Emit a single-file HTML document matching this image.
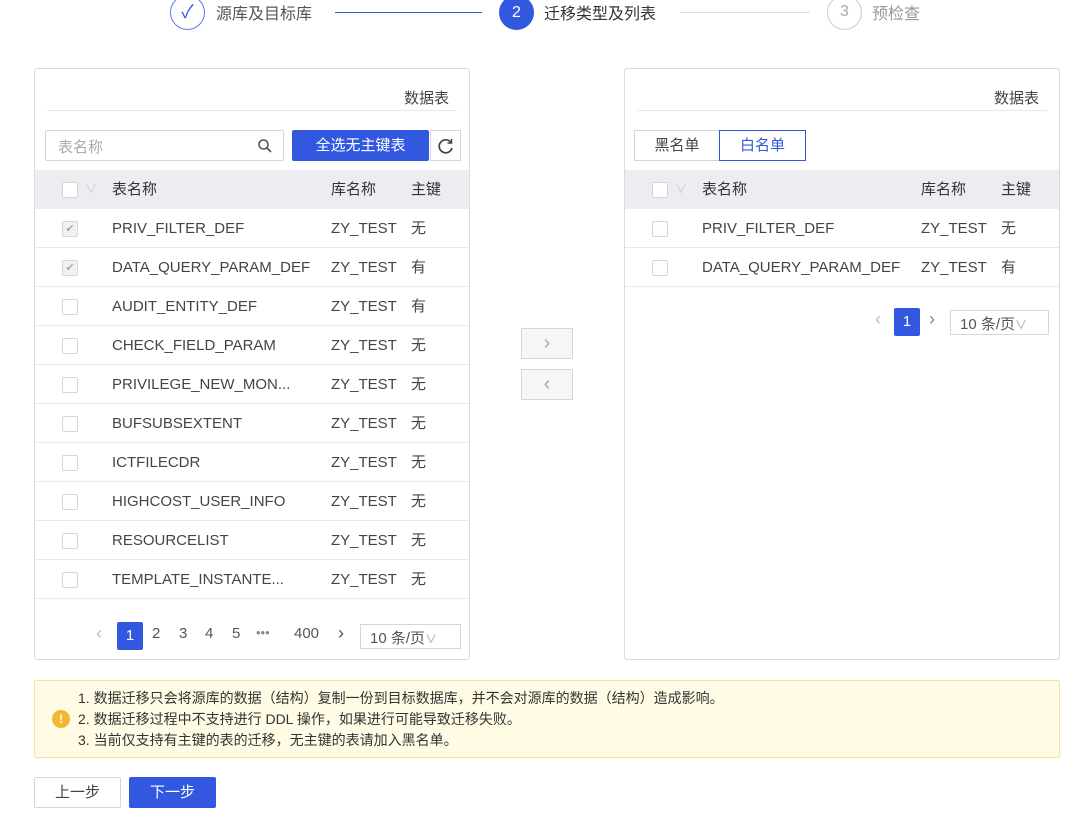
<!DOCTYPE html>
<html><head><meta charset="utf-8"><style>
*{box-sizing:border-box;margin:0;padding:0}
body{width:1080px;height:821px;background:#fff;font-family:"Liberation Sans","Noto Sans CJK SC",sans-serif;font-size:15px;color:#333;position:relative;overflow:hidden}
.a{position:absolute}
.panel{position:absolute;top:68px;width:436px;height:592px;border:1px solid #d8dbe0;border-radius:3px}
.ttl{position:absolute;right:20px;top:18px;font-size:15px;color:#444}
.hr{position:absolute;left:12px;right:12px;top:41px;border-top:1px solid #e6e8eb}
.hd{position:absolute;left:0;right:0;top:101px;height:39px;background:#ebedf0}
.row{position:absolute;left:0;right:0;height:39px;border-bottom:1px solid #e8eaed}
.cb{position:absolute;left:27px;top:12px;width:16px;height:16px;border:1px solid #d4d6da;border-radius:2px;background:#fff}
.cb.on{background:#f0f1f3;color:#aaa;font-size:11px;text-align:center;line-height:14px}
.t{position:absolute;top:0;line-height:39px;font-size:15px;color:#444;white-space:nowrap}
.blue{background:#3358e0!important;color:#fff!important}
.pg{position:absolute;font-size:15px;color:#555}
</style></head><body>
<!-- steps -->
<div class="a" style="left:170px;top:-5px;width:35px;height:35px;border:1.5px solid #5b7be6;border-radius:50%;color:#3358e0;text-align:center;line-height:32px;font-size:18px">✓</div>
<div class="a" style="left:216px;top:0px;font-size:16px;color:#555">源库及目标库</div>
<div class="a" style="left:335px;top:12px;width:147px;border-top:1.5px solid #3358e0"></div>
<div class="a blue" style="left:499px;top:-5px;width:35px;height:35px;border-radius:50%;text-align:center;line-height:35px;font-size:16px">2</div>
<div class="a" style="left:544px;top:0px;font-size:16px;color:#333">迁移类型及列表</div>
<div class="a" style="left:680px;top:12px;width:130px;border-top:1px solid #ddd"></div>
<div class="a" style="left:827px;top:-5px;width:35px;height:35px;border:1.5px solid #ccc;border-radius:50%;color:#aaa;text-align:center;line-height:32px;font-size:16px">3</div>
<div class="a" style="left:872px;top:0px;font-size:16px;color:#999">预检查</div>

<!-- left panel -->
<div class="panel" style="left:34px">
 <div class="ttl">数据表</div><div class="hr"></div>
 <div class="a" style="left:10px;top:61px;width:239px;height:31px;border:1px solid #d4d6da;border-radius:2px;color:#aaa;padding:5px 12px;font-size:15px">表名称<svg class="a" style="right:10px;top:7px" width="16" height="16" viewBox="0 0 16 16"><circle cx="6.5" cy="6.5" r="4.5" fill="none" stroke="#555" stroke-width="1.6"/><path d="M10 10l4 4" stroke="#555" stroke-width="1.8"/></svg></div>
 <div class="a blue" style="left:257px;top:61px;width:137px;height:31px;border-radius:2px;text-align:center;line-height:31px;font-size:15px">全选无主键表</div>
 <div class="a" style="left:395px;top:61px;width:31px;height:31px;border:1px solid #d4d6da"><svg class="a" style="left:6px;top:6px" width="18" height="18" viewBox="0 0 18 18"><path d="M14 5.5A6.5 6.5 0 1 0 15 11" fill="none" stroke="#444" stroke-width="1.7"/><path d="M14.5 2v4h-4" fill="none" stroke="#444" stroke-width="1.5"/></svg></div>
 <div class="hd"><div class="cb"></div><div class="t" style="left:50px;color:#ccc;font-size:12px">∨</div><div class="t" style="left:77px;color:#333">表名称</div><div class="t" style="left:296px;color:#333">库名称</div><div class="t" style="left:376px;color:#333">主键</div></div>
 <div class="row" style="top:140px"><div class="cb on">✔</div><div class="t" style="left:77px">PRIV_FILTER_DEF</div><div class="t" style="left:296px">ZY_TEST</div><div class="t" style="left:376px">无</div></div>
 <div class="row" style="top:179px"><div class="cb on">✔</div><div class="t" style="left:77px">DATA_QUERY_PARAM_DEF</div><div class="t" style="left:296px">ZY_TEST</div><div class="t" style="left:376px">有</div></div>
 <div class="row" style="top:218px"><div class="cb"></div><div class="t" style="left:77px">AUDIT_ENTITY_DEF</div><div class="t" style="left:296px">ZY_TEST</div><div class="t" style="left:376px">有</div></div>
 <div class="row" style="top:257px"><div class="cb"></div><div class="t" style="left:77px">CHECK_FIELD_PARAM</div><div class="t" style="left:296px">ZY_TEST</div><div class="t" style="left:376px">无</div></div>
 <div class="row" style="top:296px"><div class="cb"></div><div class="t" style="left:77px">PRIVILEGE_NEW_MON...</div><div class="t" style="left:296px">ZY_TEST</div><div class="t" style="left:376px">无</div></div>
 <div class="row" style="top:335px"><div class="cb"></div><div class="t" style="left:77px">BUFSUBSEXTENT</div><div class="t" style="left:296px">ZY_TEST</div><div class="t" style="left:376px">无</div></div>
 <div class="row" style="top:374px"><div class="cb"></div><div class="t" style="left:77px">ICTFILECDR</div><div class="t" style="left:296px">ZY_TEST</div><div class="t" style="left:376px">无</div></div>
 <div class="row" style="top:413px"><div class="cb"></div><div class="t" style="left:77px">HIGHCOST_USER_INFO</div><div class="t" style="left:296px">ZY_TEST</div><div class="t" style="left:376px">无</div></div>
 <div class="row" style="top:452px"><div class="cb"></div><div class="t" style="left:77px">RESOURCELIST</div><div class="t" style="left:296px">ZY_TEST</div><div class="t" style="left:376px">无</div></div>
 <div class="row" style="top:491px"><div class="cb"></div><div class="t" style="left:77px">TEMPLATE_INSTANTE...</div><div class="t" style="left:296px">ZY_TEST</div><div class="t" style="left:376px">无</div></div>
 <div class="pg" style="left:61px;top:554px;color:#bbb;font-size:18px">‹</div>
 <div class="pg blue" style="left:82px;top:553px;width:26px;height:28px;border-radius:2px;text-align:center;line-height:28px">1</div>
 <div class="pg" style="left:117px;top:556px">2</div><div class="pg" style="left:144px;top:556px">3</div><div class="pg" style="left:170px;top:556px">4</div><div class="pg" style="left:197px;top:556px">5</div>
 <div class="pg" style="left:221px;top:556px;color:#888;font-size:13px">•••</div><div class="pg" style="left:259px;top:556px">400</div>
 <div class="pg" style="left:303px;top:554px;font-size:18px">›</div>
 <div class="pg" style="left:325px;top:555px;width:101px;height:25px;border:1px solid #d4d6da;padding:2px 9px;font-size:15px">10 条/页<span style="color:#aaa;font-size:12px">∨</span></div>
</div>

<!-- middle -->
<div class="a" style="left:521px;top:328px;width:52px;height:31px;border:1px solid #d4d6da;background:#f5f6f7;color:#aaa;text-align:center;line-height:28px;font-size:20px">›</div>
<div class="a" style="left:521px;top:369px;width:52px;height:31px;border:1px solid #d4d6da;background:#f5f6f7;color:#aaa;text-align:center;line-height:28px;font-size:20px">‹</div>

<!-- right panel -->
<div class="panel" style="left:624px">
 <div class="ttl">数据表</div><div class="hr"></div>
 <div class="a" style="left:9px;top:61px;width:86px;height:31px;border:1px solid #d4d6da;text-align:center;line-height:29px;color:#444">黑名单</div>
 <div class="a" style="left:94px;top:61px;width:87px;height:31px;border:1px solid #3358e0;text-align:center;line-height:29px;color:#3358e0">白名单</div>
 <div class="hd"><div class="cb"></div><div class="t" style="left:50px;color:#ccc;font-size:12px">∨</div><div class="t" style="left:77px;color:#333">表名称</div><div class="t" style="left:296px;color:#333">库名称</div><div class="t" style="left:376px;color:#333">主键</div></div>
 <div class="row" style="top:140px"><div class="cb"></div><div class="t" style="left:77px">PRIV_FILTER_DEF</div><div class="t" style="left:296px">ZY_TEST</div><div class="t" style="left:376px">无</div></div>
 <div class="row" style="top:179px"><div class="cb"></div><div class="t" style="left:77px">DATA_QUERY_PARAM_DEF</div><div class="t" style="left:296px">ZY_TEST</div><div class="t" style="left:376px">有</div></div>
 <div class="pg" style="left:250px;top:240px;color:#bbb;font-size:18px">‹</div>
 <div class="pg blue" style="left:269px;top:239px;width:26px;height:28px;border-radius:2px;text-align:center;line-height:28px">1</div>
 <div class="pg" style="left:304px;top:240px;font-size:18px;color:#888">›</div>
 <div class="pg" style="left:325px;top:241px;width:99px;height:25px;border:1px solid #d4d6da;padding:2px 9px">10 条/页<span style="color:#aaa;font-size:12px">∨</span></div>
</div>

<!-- alert -->
<div class="a" style="left:34px;top:680px;width:1026px;height:78px;background:#fffbe5;border:1px solid #f6e39a;border-radius:2px"></div>
<div class="a" style="left:52px;top:710px;width:18px;height:18px;border-radius:50%;background:#f5b731;color:#fff;font-size:12px;font-weight:bold;text-align:center;line-height:18px">!</div>
<div class="a" style="left:78px;top:688px;font-size:14px;line-height:21px;color:#333">1. 数据迁移只会将源库的数据（结构）复制一份到目标数据库，并不会对源库的数据（结构）造成影响。<br>2. 数据迁移过程中不支持进行 DDL 操作，如果进行可能导致迁移失败。<br>3. 当前仅支持有主键的表的迁移，无主键的表请加入黑名单。</div>

<div class="a" style="left:34px;top:777px;width:87px;height:31px;border:1px solid #d4d6da;border-radius:2px;text-align:center;line-height:29px;color:#444">上一步</div>
<div class="a blue" style="left:129px;top:777px;width:87px;height:31px;border-radius:2px;text-align:center;line-height:31px">下一步</div>
</body></html>
